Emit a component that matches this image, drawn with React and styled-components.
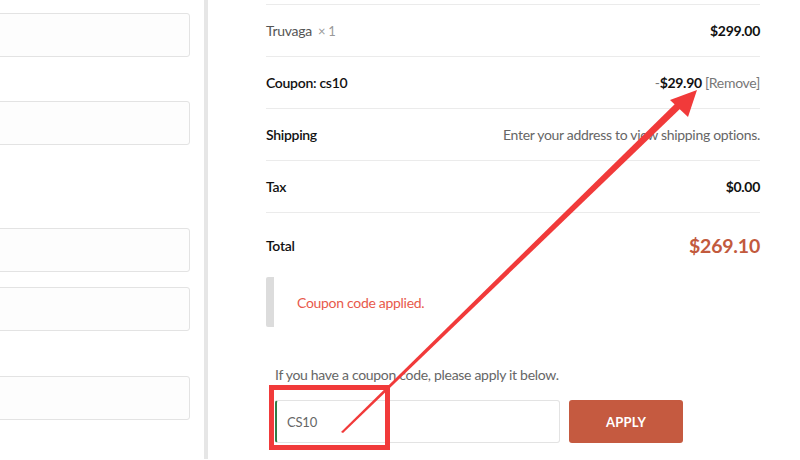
import React from "react";
import styled, { createGlobalStyle } from "styled-components";

const GlobalStyle = createGlobalStyle`
  html, body {
    margin: 0;
    padding: 0;
    background: #fff;
  }
  body {
    font-family: "Lato", "Liberation Sans", sans-serif;
    font-size: 14px;
    letter-spacing: -0.3px;
    color: #555;
    overflow: hidden;
  }
`;

const rows = [
  { kind: "item", label: "Truvaga", qty: "× 1", value: "$299.00" },
  { kind: "coupon", label: "Coupon: cs10", value: "$29.90" },
  { kind: "note", label: "Shipping", value: "Enter your address to view shipping options." },
  { kind: "plain", label: "Tax", value: "$0.00" },
];

function App() {
  return (
    <Page>
      <GlobalStyle />
      <LeftColumn>
        <Field $top={13} />
        <Field $top={44} />
        <Field $top={83} />
        <Field $top={15} />
        <Field $top={45} />
      </LeftColumn>
      <Divider />
      <Summary>
        <Table>
          {rows.map((r) => (
            <Row key={r.label}>
              {r.kind === "item" ? (
                <ItemName>
                  {r.label} <Qty>{r.qty}</Qty>
                </ItemName>
              ) : (
                <Label>{r.label}</Label>
              )}
              {r.kind === "coupon" ? (
                <Value>
                  <Dash>-</Dash>
                  {r.value} <Remove>[Remove]</Remove>
                </Value>
              ) : r.kind === "note" ? (
                <Note>{r.value}</Note>
              ) : (
                <Value>{r.value}</Value>
              )}
            </Row>
          ))}
          <TotalRow>
            <Label>Total</Label>
            <TotalValue>$269.10</TotalValue>
          </TotalRow>
        </Table>
        <Notice>Coupon code applied.</Notice>
        <CouponBox>
          <Hint>If you have a coupon code, please apply it below.</Hint>
          <CouponForm>
            <CodeInput defaultValue="CS10" />
            <ApplyButton>APPLY</ApplyButton>
          </CouponForm>
        </CouponBox>
      </Summary>
      <Annotation width="800" height="460" viewBox="0 0 800 460">
        <rect x="271.5" y="387.5" width="116" height="60" fill="none" stroke="#f13a3a" strokeWidth="5" />
        <polygon points="341,432 343,433 683,106 678,101" fill="#f13a3a" />
        <polygon points="697,90 670,100 688,117" fill="#f13a3a" />
      </Annotation>
    </Page>
  );
}

export default App;

const Page = styled.div`
  position: relative;
  width: 800px;
  height: 460px;
  display: flex;
  overflow: hidden;
`;

const LeftColumn = styled.div`
  width: 200px;
  margin-left: -10px;
  display: flex;
  flex-direction: column;
`;

const Field = styled.div`
  margin-top: ${(p) => p.$top}px;
  height: 42px;
  border: 1px solid #e3e3e3;
  border-radius: 3px;
  background: #fdfdfd;
  flex-shrink: 0;
`;

const Divider = styled.div`
  width: 4px;
  height: 459px;
  margin-left: 14px;
  background: #e6e6e6;
`;

const Summary = styled.div`
  flex: 1;
  padding: 4px 40px 0 58px;
  display: flex;
  flex-direction: column;
`;

const Table = styled.div`
  display: flex;
  flex-direction: column;
`;

const Row = styled.div`
  height: 51px;
  border-top: 1px solid #ebebeb;
  display: flex;
  align-items: center;
  justify-content: space-between;
  &:nth-child(4) {
    border-bottom: 1px solid #ebebeb;
  }
`;

const TotalRow = styled(Row)`
  height: 64px;
  border-top: none;
`;

const ItemName = styled.span`
  color: #555;
`;

const Qty = styled.span`
  color: #999;
  font-size: 13px;
  margin-left: 3px;
`;

const Label = styled.span`
  color: #111;
  font-weight: 600;
`;

const Value = styled.span`
  color: #111;
  font-weight: 700;
`;

const Dash = styled.span`
  color: #777;
  font-weight: 400;
`;

const Remove = styled.span`
  color: #777;
  font-weight: 400;
`;

const Note = styled.span`
  color: #666;
`;

const TotalValue = styled.span`
  color: #c25a3d;
  font-weight: 700;
  font-size: 19.5px;
  letter-spacing: -0.2px;
`;

const Notice = styled.div`
  height: 50px;
  border-left: 8px solid #dcdcdc;
  border-radius: 2px;
  padding-left: 23px;
  display: flex;
  align-items: center;
  color: #e8594b;
`;

const CouponBox = styled.div`
  margin-top: 38px;
  padding-left: 9px;
`;

const Hint = styled.p`
  margin: 0;
  line-height: 20px;
  color: #666;
`;

const CouponForm = styled.div`
  margin-top: 15px;
  display: flex;
  gap: 9px;
`;

const CodeInput = styled.input`
  width: 285px;
  height: 43px;
  box-sizing: border-box;
  border: 1px solid #e3e3e3;
  border-left: 2px solid #2f7d46;
  border-radius: 3px;
  padding: 0 0 0 10px;
  font-family: inherit;
  font-size: 13px;
  letter-spacing: -0.2px;
  color: #666;
  outline: none;
`;

const ApplyButton = styled.button`
  width: 114px;
  height: 43px;
  border: none;
  border-radius: 3px;
  background: #c55a40;
  color: #fff;
  font-family: inherit;
  font-weight: 700;
  font-size: 13px;
  letter-spacing: 0.2px;
`;

const Annotation = styled.svg`
  position: absolute;
  left: 0;
  top: 0;
  pointer-events: none;
`;
